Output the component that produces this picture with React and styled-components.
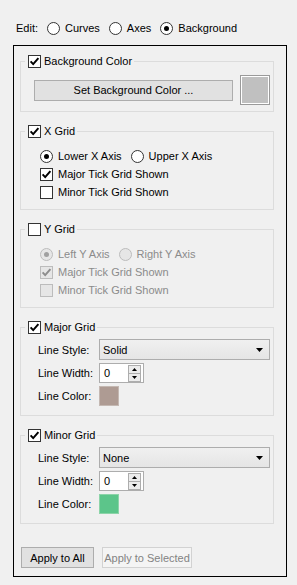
import React from 'react';
import styled, { createGlobalStyle } from 'styled-components';

const GlobalStyle = createGlobalStyle`
  html, body {
    margin: 0;
    padding: 0;
    background: #f0f0f0;
  }
  body {
    font-family: "Liberation Sans", Arial, sans-serif;
    font-size: 11px;
    color: #000;
  }
`;

const Window = styled.div`
  width: 297px;
  height: 585px;
  box-sizing: border-box;
  padding: 22px 0 0 13px;
`;

const EditRow = styled.div`
  display: flex;
  align-items: center;
  height: 13px;
  margin: 0 0 10px 3px;
`;

const EditLabel = styled.span`
  width: 31px;
  line-height: 13px;
`;

const Frame = styled.div`
  width: 274px;
  height: 532px;
  box-sizing: border-box;
  border: 1px solid #000;
  padding: 9px 12px 0 6px;
  display: flex;
  flex-direction: column;
`;

const Group = styled.fieldset`
  margin: 0;
  padding: 0;
  min-width: 0;
  border: 1px solid #dcdcdc;
  & + & {
    margin-top: 13px;
  }
`;

const Legend = styled.legend`
  display: flex;
  align-items: center;
  gap: 3px;
  height: 13px;
  line-height: 13px;
  padding: 0 2px 0 3px;
  margin-left: 4px;
`;

const Body = styled.div`
  padding: ${p => p.$pad};
  display: flex;
  flex-direction: ${p => (p.$row ? 'row' : 'column')};
  align-items: ${p => (p.$row ? 'center' : 'stretch')};
  gap: ${p => p.$gap || 0}px;
`;

const Row = styled.div`
  display: flex;
  align-items: center;
  height: ${p => p.$h || 18}px;
`;

const Option = styled.label`
  display: flex;
  align-items: center;
  gap: ${p => p.$gap ?? 5}px;
  margin-right: ${p => p.$mr || 0}px;
  color: ${p => (p.$disabled ? '#8b8b8b' : '#000')};
  line-height: 13px;
  white-space: nowrap;
`;

const Box = styled.span`
  flex: none;
  width: 13px;
  height: 13px;
  box-sizing: border-box;
  border: 1px solid ${p => (p.$disabled ? '#bcbcbc' : '#333')};
  background: ${p => (p.$disabled ? '#e6e6e6' : '#fff')};
  display: flex;
  align-items: center;
  justify-content: center;
`;

const Circle = styled.span`
  flex: none;
  width: 13px;
  height: 13px;
  box-sizing: border-box;
  border-radius: 50%;
  border: 1px solid ${p => (p.$disabled ? '#bcbcbc' : '#333')};
  background: ${p => (p.$disabled ? '#e6e6e6' : '#fff')};
  display: flex;
  align-items: center;
  justify-content: center;
  &::after {
    content: '';
    display: ${p => (p.$on ? 'block' : 'none')};
    width: 5px;
    height: 5px;
    border-radius: 50%;
    background: ${p => (p.$disabled ? '#a0a0a0' : '#000')};
  }
`;

const Button = styled.button`
  box-sizing: border-box;
  width: ${p => p.$w}px;
  height: 21px;
  flex: none;
  padding: 0;
  margin: 0;
  font: inherit;
  border: 1px solid ${p => (p.disabled ? '#d2d2d2' : '#adadad')};
  background: ${p => (p.disabled ? '#f4f4f4' : '#e1e1e1')};
  color: ${p => (p.disabled ? '#838383' : '#000')};
`;

const Swatch = styled.span`
  flex: none;
  box-sizing: border-box;
  width: ${p => p.$size}px;
  height: ${p => p.$size}px;
  border: 1px solid ${p => p.$border};
  box-shadow: ${p => (p.$inset ? 'inset 0 0 0 1px #fff' : 'none')};
  background: ${p => p.$color};
`;

const FieldLabel = styled.span`
  width: 61px;
  flex: none;
`;

const Combo = styled.div`
  box-sizing: border-box;
  width: 171px;
  height: 21px;
  display: flex;
  align-items: center;
  justify-content: space-between;
  padding: 0 6px 0 3px;
  border: 1px solid #adadad;
  background: linear-gradient(#f0f0f0, #e5e5e5);
`;

const Spin = styled.div`
  box-sizing: border-box;
  width: 45px;
  height: 20px;
  display: flex;
  align-items: center;
  padding: 1px 2px 1px 4px;
  border: 1px solid #adadad;
  background: #fff;
`;

const SpinValue = styled.span`
  flex: 1;
`;

const SpinButtons = styled.div`
  display: flex;
  flex-direction: column;
  width: 13px;
`;

const SpinButton = styled.div`
  box-sizing: border-box;
  height: 9px;
  border: 1px solid #adadad;
  background: #ececec;
  display: flex;
  align-items: center;
  justify-content: center;
  & + & {
    margin-top: -1px;
  }
`;

const Footer = styled.div`
  display: flex;
  gap: 8px;
  margin: 23px 0 0 1px;
`;

const Check = ({ on, disabled }) => (
  <Box $disabled={disabled}>
    {on && (
      <svg width="11" height="11" viewBox="0 0 11 11">
        <path
          d="M1.6 5.4 L4.2 8.1 L9.4 2.2"
          fill="none"
          stroke={disabled ? '#8d8d8d' : '#000'}
          strokeWidth="2"
        />
      </svg>
    )}
  </Box>
);

const Arrow = ({ up }) => (
  <svg width="7" height="4" viewBox="0 0 7 4">
    <polygon points={up ? '0,4 7,4 3.5,0' : '0,0 7,0 3.5,4'} fill="#000" />
  </svg>
);

const SmallArrow = ({ up }) => (
  <svg width="5" height="3" viewBox="0 0 5 3">
    <polygon points={up ? '0,3 5,3 2.5,0' : '0,0 5,0 2.5,3'} fill="#000" />
  </svg>
);

const CheckOption = ({ on, disabled, children }) => (
  <Row>
    <Option $disabled={disabled}>
      <Check on={on} disabled={disabled} />
      {children}
    </Option>
  </Row>
);

const GridGroup = ({ title, on, disabled, axes, sel, major, minor }) => (
  <Group>
    <Legend>
      <Check on={on} />
      {title}
    </Legend>
    <Body $pad="9px 0 8px 19px">
      <Row>
        <Option $disabled={disabled} $mr={9}>
          <Circle $on={sel === 0} $disabled={disabled} />
          {axes[0]}
        </Option>
        <Option $disabled={disabled}>
          <Circle $on={sel === 1} $disabled={disabled} />
          {axes[1]}
        </Option>
      </Row>
      <CheckOption on={major} disabled={disabled}>Major Tick Grid Shown</CheckOption>
      <CheckOption on={minor} disabled={disabled}>Minor Tick Grid Shown</CheckOption>
    </Body>
  </Group>
);

const LineGroup = ({ title, style, color, border }) => (
  <Group>
    <Legend>
      <Check on />
      {title}
    </Legend>
    <Body $pad="5px 0 9px 17px" $gap={3}>
      <Row $h={21}>
        <FieldLabel>Line Style:</FieldLabel>
        <Combo>
          <span>{style}</span>
          <Arrow />
        </Combo>
      </Row>
      <Row $h={20}>
        <FieldLabel>Line Width:</FieldLabel>
        <Spin>
          <SpinValue>0</SpinValue>
          <SpinButtons>
            <SpinButton><SmallArrow up /></SpinButton>
            <SpinButton><SmallArrow /></SpinButton>
          </SpinButtons>
        </Spin>
      </Row>
      <Row $h={20}>
        <FieldLabel>Line Color:</FieldLabel>
        <Swatch $size={20} $color={color} $border={border} />
      </Row>
    </Body>
  </Group>
);

export default function App() {
  return (
    <Window>
      <GlobalStyle />
      <EditRow>
        <EditLabel>Edit:</EditLabel>
        <Option $mr={9}>
          <Circle />
          Curves
        </Option>
        <Option $mr={9}>
          <Circle />
          Axes
        </Option>
        <Option>
          <Circle $on />
          Background
        </Option>
      </EditRow>
      <Frame>
        <Group>
          <Legend>
            <Check on />
            Background Color
          </Legend>
          <Body $row $pad="7px 3px 6px 13px" $gap={7}>
            <Button $w={199}>Set Background Color ...</Button>
            <Swatch $size={30} $color="#c0c0c0" $border="#9a9a9a" $inset />
          </Body>
        </Group>
        <GridGroup
          title="X Grid"
          on
          axes={['Lower X Axis', 'Upper X Axis']}
          sel={0}
          major
        />
        <GridGroup
          title="Y Grid"
          disabled
          axes={['Left Y Axis', 'Right Y Axis']}
          sel={0}
          major
        />
        <LineGroup title="Major Grid" style="Solid" color="#ae9b93" border="#c4b8b2" />
        <LineGroup title="Minor Grid" style="None" color="#5cc58a" border="#8cd4a8" />
        <Footer>
          <Button $w={73}>Apply to All</Button>
          <Button $w={90} disabled>Apply to Selected</Button>
        </Footer>
      </Frame>
    </Window>
  );
}
